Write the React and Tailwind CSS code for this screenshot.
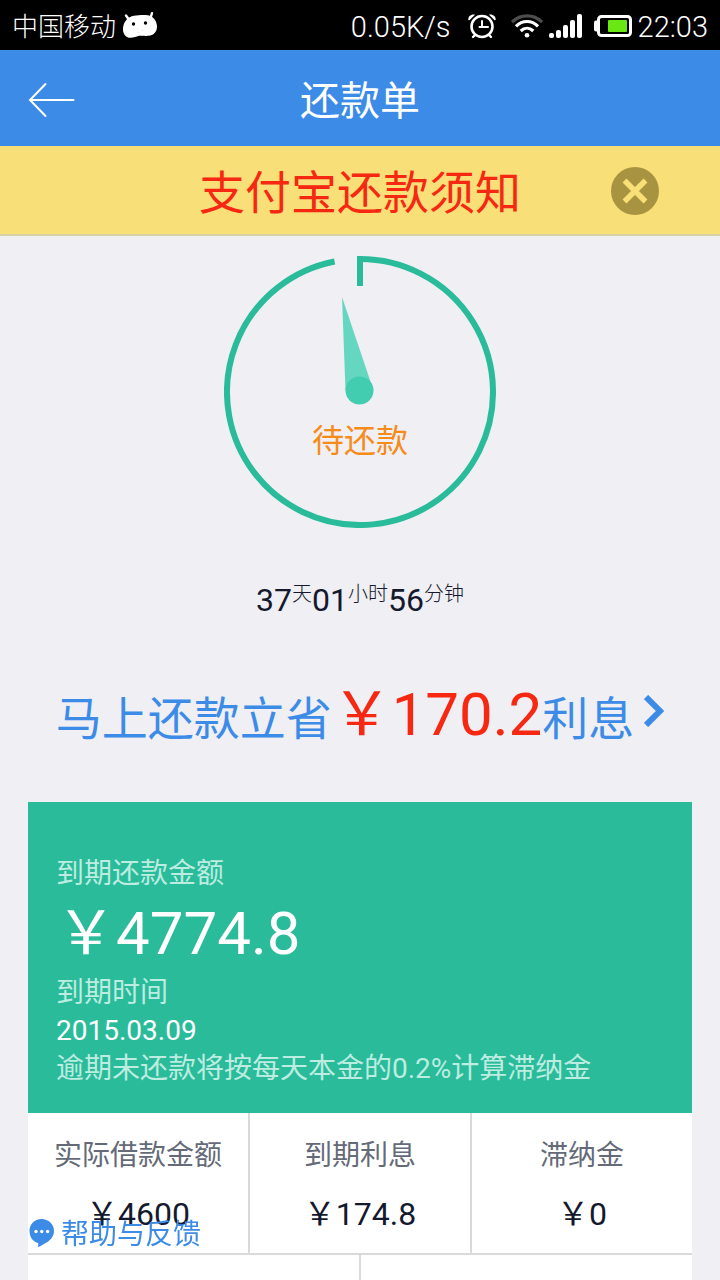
const bill = {
  due: '￥4774.8',
  dueDate: '2015.03.09',
  saving: '￥170.2',
}

const countdown = [
  { value: '37', unit: '天' },
  { value: '01', unit: '小时' },
  { value: '56', unit: '分钟' },
]

const details = [
  { label: '实际借款金额', value: '￥4600' },
  { label: '到期利息', value: '￥174.8' },
  { label: '滞纳金', value: '￥0' },
]

function RobotIcon() {
  return (
    <svg width="36" height="28" viewBox="0 0 36 28" fill="#fff">
      <path d="M4 4.5l3.5 5M30 2.2L28.5 7" stroke="#fff" strokeWidth="2.4" strokeLinecap="round" />
      <path d="M1 19C.6 11.5 6 5.4 12 4.8c4-.5 9-1 14-.5 5 .7 9 5.700 9 11.200 0 5.500-3.500 9-8.500 9.300-3.500.3-6.500-.3-9.500 0-3 .8-5 2-8.500 2C4 26.800 1.300 23.500 1 19z" />
      <circle cx="11.500" cy="13" r="1.700" fill="#000" />
      <circle cx="23.500" cy="12" r="1.700" fill="#000" />
      <path d="M15.500 18h1M20 19.500h1M16 21.500h1" stroke="#ddd" strokeWidth="1" />
    </svg>
  )
}

function AlarmIcon() {
  return (
    <svg width="30" height="26" viewBox="0 0 30 26" fill="none" stroke="#fff" strokeLinecap="round">
      <circle cx="15" cy="13.500" r="10.500" strokeWidth="2.600" />
      <path d="M15 8v6h6M12.500 14H15" strokeWidth="2" />
      <path d="M7.500 22.500L6 24M22.500 22.500L24 24" strokeWidth="2.400" />
      <path d="M1.300 7C1 3.500 4 1 8 1.700L2.400 7.200zM28.700 7C29 3.500 26 1 22 1.700l5.600 5.500z" fill="#fff" stroke="none" />
    </svg>
  )
}

function WifiIcon() {
  return (
    <svg width="32" height="26" viewBox="0 0 32 26" fill="none" strokeWidth="3.200">
      <path d="M1 9C9.500.8 22.500.8 31 9" stroke="#4d4d4d" />
      <path d="M5 13.300c6.300-6.400 15.700-6.400 22 0" stroke="#fff" />
      <path d="M9.700 18c3.800-3.700 8.800-3.700 12.600 0" stroke="#fff" />
      <circle cx="16" cy="22.300" r="2.300" fill="#fff" />
    </svg>
  )
}

function SignalIcon() {
  return (
    <svg width="33" height="24" viewBox="0 0 33 24" fill="#fff">
      <rect x="0" y="19" width="5" height="5" rx="2" />
      <rect x="7" y="16" width="5" height="8" rx="2" />
      <rect x="14" y="11" width="5" height="13" rx="2" />
      <rect x="21" y="6" width="5" height="18" rx="2" />
      <rect x="28" y="0" width="5" height="24" rx="2" />
    </svg>
  )
}

function BatteryIcon() {
  return (
    <svg width="38" height="22" viewBox="0 0 38 22" fill="none">
      <rect x="0" y="5.500" width="5" height="11" rx="2" fill="#fff" />
      <rect x="4.500" y="1.500" width="32" height="19" rx="3" stroke="#fff" strokeWidth="3" />
      <rect x="14" y="5" width="19" height="12" rx="1" fill="#6ae814" />
    </svg>
  )
}

function StatusBar() {
  return (
    <div className="flex h-[50px] shrink-0 items-center justify-between bg-black px-3 font-light text-white">
      <div className="flex items-center gap-1.5">
        <span className="pt-1 text-[26px] leading-[48px]">中国移动</span>
        <RobotIcon />
      </div>
      <div className="flex items-center pt-0.5">
        <span className="mr-4 pt-0.5 text-[29px] leading-[46px]">0.05K/s</span>
        <AlarmIcon />
        <span className="w-3.5" />
        <WifiIcon />
        <span className="w-1.5" />
        <SignalIcon />
        <span className="w-3" />
        <BatteryIcon />
        <span className="ml-1.5 pt-0.5 text-[29px] leading-[46px]">22:03</span>
      </div>
    </div>
  )
}

function Gauge() {
  return (
    <div className="relative">
      <svg width="272" height="272" viewBox="0 0 272 272" fill="none">
        <path d="M136 3A133 133 0 1 1 110.600 5.450" stroke="#2abb9b" strokeWidth="6" />
        <path d="M136 0v30" stroke="#2abb9b" strokeWidth="6" />
        <path d="M118 41l31.500 93.500h-28z" fill="#65d6bf" />
        <circle cx="135.500" cy="134.500" r="14" fill="#42cdb1" />
      </svg>
      <p className="absolute inset-x-0 top-40 text-center text-[32px] leading-[50px] text-[#f68b1a]">待还款</p>
    </div>
  )
}

export default function App() {
  return (
    <div className="flex h-screen flex-col overflow-hidden bg-[#efeff4] font-['Roboto','Noto_Sans_CJK_SC',sans-serif]">
      <StatusBar />

      <header className="grid h-24 shrink-0 grid-cols-[100px_1fr_100px] items-center bg-[#3c8ce7] pt-1 text-white">
        <button aria-label="返回" className="pl-7">
          <svg width="48" height="36" viewBox="0 0 48 36" fill="none" stroke="#fff" strokeWidth="2" strokeLinecap="round">
            <path d="M2 18h43.500M17.500 2L2 18l15.500 16" />
          </svg>
        </button>
        <h1 className="pt-1 text-center text-[40px] leading-[60px]">还款单</h1>
      </header>

      <div className="grid h-[90px] shrink-0 grid-cols-[120px_1fr_120px] items-center border-b-2 border-[#d9d1a6] bg-[#f8df78] pt-0.5">
        <a href="#notice" className="col-start-2 pt-1 text-center text-[46px] leading-[80px] text-[#f62812]">支付宝还款须知</a>
        <button aria-label="关闭" className="justify-self-start pl-[11px]">
          <svg width="48" height="48" viewBox="0 0 48 48">
            <circle cx="24" cy="24" r="24" fill="#a89340" />
            <path d="M13.500 13.500l21 21M34.500 13.500l-21 21" stroke="#f8df78" strokeWidth="5.500" />
          </svg>
        </button>
      </div>

      <main className="min-h-0 flex-1 overflow-hidden px-7 pt-5">
        <div className="flex justify-center">
          <Gauge />
        </div>

        <p className="mt-12 flex justify-center text-[32px] leading-[48px] text-[#14192d]">
          {countdown.map((part) => (
            <span key={part.unit} className="flex">
              {part.value}
              <span className="text-[20px] leading-[36px] font-light">{part.unit}</span>
            </span>
          ))}
        </p>

        <a href="#repay" className="mt-[51px] flex items-start justify-center gap-2.5 text-[46px] leading-[80px] text-[#3c8ce7]">
          <span>
            马上还款立省
            <span className="text-[60px] text-[#f62812]">{bill.saving}</span>
            利息
          </span>
          <svg className="mt-5" width="20" height="32" viewBox="0 0 20 32" fill="none" stroke="#3c8ce7" strokeWidth="6">
            <path d="M2 2l14 14L2 30" />
          </svg>
        </a>

        <section className="mt-[43px] bg-[#2abb9b] px-7 pt-[53px] pb-[25px] text-[28px] leading-[38px] text-[#bdece0]">
          <p>到期还款金额</p>
          <p className="text-[60px] leading-[81px] text-white">{bill.due}</p>
          <p>到期时间</p>
          <p className="text-white">{bill.dueDate}</p>
          <p>逾期未还款将按每天本金的0.2%计算滞纳金</p>
        </section>

        <div className="flex flex-col gap-0.5 bg-[#dadada]">
          <dl className="grid grid-cols-3 gap-0.5">
            {details.map((item) => (
              <div key={item.label} className="h-[140px] bg-white pt-[23px] text-center">
                <dt className="text-[28px] leading-[40px] text-[#646a78]">{item.label}</dt>
                <dd className="mt-3.5 text-[32px] leading-[48px] text-[#14192d]">{item.value}</dd>
              </div>
            ))}
          </dl>
          <div className="grid grid-cols-2 gap-0.5">
            <div className="h-[140px] bg-white" />
            <div className="h-[140px] bg-white" />
          </div>
        </div>
      </main>

      <button className="fixed bottom-[23px] left-7 flex items-center gap-1.5 text-[28px] leading-[44px] text-[#3c8ce7]">
        <svg width="27" height="28" viewBox="0 0 27 28" fill="#3c8ce7">
          <path d="M13.500 0C20.500 0 26 5.200 26 12c0 5-3.500 9.500-7.500 11.500-3 1.800-5.500 3.500-8.500 4.500l.3-4C5 23 1.500 18 1.500 12 1.500 5.200 6.500 0 13.500 0z" />
          <circle cx="8" cy="12.500" r="1.700" fill="#fff" />
          <circle cx="13.800" cy="12.500" r="1.700" fill="#fff" />
          <circle cx="19.600" cy="12.500" r="1.700" fill="#fff" />
        </svg>
        <span className="pt-1">帮助与反馈</span>
      </button>
    </div>
  )
}
